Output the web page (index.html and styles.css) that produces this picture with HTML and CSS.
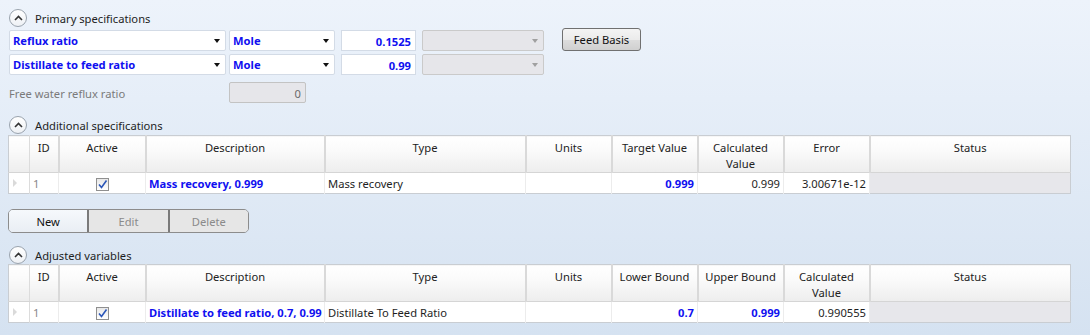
FILE: index.html
```html
<!DOCTYPE html>
<html>
  <head>
    <title>Column specifications</title>
    <link rel="stylesheet" href="styles.css">
  </head>
  <body>
    <div class="page">
      <div class="section-title">
        <span class="collapse"><svg width="9" height="6" viewBox="0 0 9 6"><path d="M1 5 L4.5 1.5 L8 5" fill="none" stroke="#333" stroke-width="1.6"/></svg></span>
        <span>Primary specifications</span>
      </div>

      <div class="spec-row first">
        <div class="combo w-name"><span>Reflux ratio</span><i class="arrow"></i></div>
        <div class="combo w-basis"><span>Mole</span><i class="arrow"></i></div>
        <div class="numbox">0.1525</div>
        <div class="combo w-extra disabled"><span></span><i class="arrow"></i></div>
        <button class="btn feed">Feed Basis</button>
      </div>
      <div class="spec-row">
        <div class="combo w-name"><span>Distillate to feed ratio</span><i class="arrow"></i></div>
        <div class="combo w-basis"><span>Mole</span><i class="arrow"></i></div>
        <div class="numbox">0.99</div>
        <div class="combo w-extra disabled"><span></span><i class="arrow"></i></div>
      </div>
      <div class="spec-row water">
        <div class="label-muted">Free water reflux ratio</div>
        <div class="numbox readonly">0</div>
      </div>

      <div class="section-title sec2">
        <span class="collapse"><svg width="9" height="6" viewBox="0 0 9 6"><path d="M1 5 L4.5 1.5 L8 5" fill="none" stroke="#333" stroke-width="1.6"/></svg></span>
        <span>Additional specifications</span>
      </div>
      <table class="grid">
        <colgroup>
          <col style="width:21px"><col style="width:29px"><col style="width:87px"><col style="width:179px"><col style="width:201px">
          <col style="width:86px"><col style="width:86px"><col style="width:86px"><col style="width:86px"><col style="width:201px">
        </colgroup>
        <tr class="head">
          <th></th><th>ID</th><th>Active</th><th>Description</th><th>Type</th><th>Units</th><th>Target Value</th><th>Calculated<br>Value</th><th>Error</th><th>Status</th>
        </tr>
        <tr class="data">
          <td class="rowhdr"><i class="tri"></i></td>
          <td class="id">1</td>
          <td class="center"><span class="check"><svg width="11" height="11" viewBox="0 0 11 11"><path d="M2 5.5 L4.5 8.5 L9.5 1.5" fill="none" stroke="#2b56b8" stroke-width="1.6"/></svg></span></td>
          <td class="blue">Mass recovery, 0.999</td>
          <td>Mass recovery</td>
          <td></td>
          <td class="num blue">0.999</td>
          <td class="num">0.999</td>
          <td class="num">3.00671e-12</td>
          <td class="status"></td>
        </tr>
      </table>

      <div class="seg">
        <button class="seg-btn active">New</button>
        <button class="seg-btn">Edit</button>
        <button class="seg-btn">Delete</button>
      </div>

      <div class="section-title sec3">
        <span class="collapse"><svg width="9" height="6" viewBox="0 0 9 6"><path d="M1 5 L4.5 1.5 L8 5" fill="none" stroke="#333" stroke-width="1.6"/></svg></span>
        <span>Adjusted variables</span>
      </div>
      <table class="grid">
        <colgroup>
          <col style="width:21px"><col style="width:29px"><col style="width:87px"><col style="width:179px"><col style="width:201px">
          <col style="width:86px"><col style="width:86px"><col style="width:86px"><col style="width:86px"><col style="width:201px">
        </colgroup>
        <tr class="head">
          <th></th><th>ID</th><th>Active</th><th>Description</th><th>Type</th><th>Units</th><th>Lower Bound</th><th>Upper Bound</th><th>Calculated<br>Value</th><th>Status</th>
        </tr>
        <tr class="data">
          <td class="rowhdr"><i class="tri"></i></td>
          <td class="id">1</td>
          <td class="center"><span class="check"><svg width="11" height="11" viewBox="0 0 11 11"><path d="M2 5.5 L4.5 8.5 L9.5 1.5" fill="none" stroke="#2b56b8" stroke-width="1.6"/></svg></span></td>
          <td class="blue">Distillate to feed ratio, 0.7, 0.99</td>
          <td>Distillate To Feed Ratio</td>
          <td></td>
          <td class="num blue">0.7</td>
          <td class="num blue">0.999</td>
          <td class="num">0.990555</td>
          <td class="status"></td>
        </tr>
      </table>
    </div>
  </body>
</html>
```

FILE: styles.css
```css
html, body {
  margin: 0;
  height: 100%;
}
body {
  font-family: "Noto Sans", Arial, sans-serif;
  font-size: 11.2px;
  color: #1e1e1e;
  background: linear-gradient(#edf3fb, #d5e2f1);
}
.page {
  padding: 9px 0 0 8px;
}
.section-title {
  display: flex;
  align-items: center;
  gap: 8px;
  height: 18px;
  padding-left: 1px;
}
.section-title.sec2 {
  margin-top: 13px;
}
.section-title.sec3 {
  margin-top: 13px;
}
.collapse {
  box-sizing: border-box;
  width: 18px;
  height: 18px;
  border: 1px solid #9aa3ad;
  border-radius: 50%;
  background: linear-gradient(#ffffff, #eef1f5);
  display: flex;
  align-items: center;
  justify-content: center;
}
.spec-row {
  display: flex;
  align-items: center;
  height: 21px;
  margin-top: 3px;
  padding-left: 1px;
}
.spec-row.water {
  margin-top: 7px;
}
.combo {
  box-sizing: border-box;
  height: 21px;
  background: #fff;
  border: 1px solid #d3dbe6;
  border-radius: 2px;
  display: flex;
  align-items: center;
  justify-content: space-between;
  padding: 0 5px 0 3px;
  margin-right: 3px;
  color: #1010f0;
  font-weight: bold;
}
.arrow {
  width: 0;
  height: 0;
  border-left: 3.5px solid transparent;
  border-right: 3.5px solid transparent;
  border-top: 4px solid #111;
}
.w-name { width: 217px; }
.w-basis { width: 106px; margin-right: 6px; }
.w-extra { width: 122px; margin-left: 6px; margin-right: 0; }
.combo.disabled {
  background: #e6e6ea;
  border-color: #cacaca;
}
.combo.disabled .arrow {
  border-top-color: #a0a0a0;
}
.numbox {
  box-sizing: border-box;
  width: 75px;
  height: 21px;
  background: #fff;
  border: 1px solid #d3dbe6;
  text-align: right;
  padding: 3px 4px 0 0;
  color: #1010f0;
  font-weight: bold;
}
.numbox.readonly {
  width: 77px;
  background: #e6e6ea;
  border: 1px solid #c3c3c3;
  border-radius: 2px;
  color: #6a6a6a;
  font-weight: normal;
}
.label-muted {
  width: 220px;
  color: #7a7a7a;
  padding-top: 1px;
}
.btn {
  font-family: inherit;
  font-size: 11.2px;
  color: #111;
}
.feed {
  margin-left: 18px;
  margin-top: -2px;
  width: 79px;
  height: 23px;
  border: 1px solid #707070;
  border-radius: 3px;
  background: linear-gradient(#f4f4f4 0%, #ebebeb 50%, #dddddd 51%, #d0d0d0 100%);
  padding: 0;
}
.grid {
  border-collapse: collapse;
  table-layout: fixed;
  width: 1062px;
  margin-top: 1px;
  border: 1px solid #c9cdd2;
  background: #fff;
}
.section-title.sec3 + .grid {
  margin-top: 0;
}
.grid th {
  height: 34px;
  box-sizing: border-box;
  vertical-align: top;
  font-weight: normal;
  padding: 4px 2px 0;
  line-height: 16px;
  background: linear-gradient(#ffffff 0%, #fafafa 40%, #ededed 100%);
  border-right: 2px solid #d9d9d9;
  border-bottom: 1px solid #d5d5d5;
  color: #222;
}
.grid th:first-child {
  border-right: 1px solid #dcdcdc;
}
.grid th:last-child {
  border-right: none;
}
.grid td {
  height: 21px;
  box-sizing: border-box;
  padding: 0 3px;
  border-right: 1px solid #ececec;
  white-space: nowrap;
  overflow: hidden;
}
.grid td.rowhdr {
  padding: 0;
  border-right: 1px solid #dcdcdc;
  background: #fff;
}
.tri {
  display: block;
  margin-left: 4px;
  width: 0;
  height: 0;
  border-top: 4px solid transparent;
  border-bottom: 4px solid transparent;
  border-left: 4px solid #dadada;
}
.grid td.id {
  color: #888;
}
.grid td.center {
  text-align: center;
}
.check {
  display: inline-flex;
  align-items: center;
  justify-content: center;
  box-sizing: border-box;
  width: 13px;
  height: 13px;
  border: 1px solid #8f8f8f;
  background: linear-gradient(#e8e8e8, #ffffff);
  vertical-align: middle;
}
.blue {
  color: #1010f0;
  font-weight: bold;
}
.num {
  text-align: right;
}
.grid td.status {
  background: #e7e7eb;
  border-right: none;
}
.seg {
  display: flex;
  margin-top: 15px;
  width: 241px;
  height: 24px;
  box-sizing: border-box;
  border: 1px solid #8c8c8c;
  border-radius: 5px;
  overflow: hidden;
}
.seg-btn {
  flex: 1;
  font-family: inherit;
  font-size: 11.2px;
  border: none;
  border-left: 2px solid #7a7a7a;
  background: #e6e6e6;
  color: #8a8a8a;
  padding: 0;
}
.seg-btn:first-child {
  border-left: none;
}
.seg-btn.active {
  background: linear-gradient(#f6f9fc, #e9eef4);
  color: #111;
}
```
